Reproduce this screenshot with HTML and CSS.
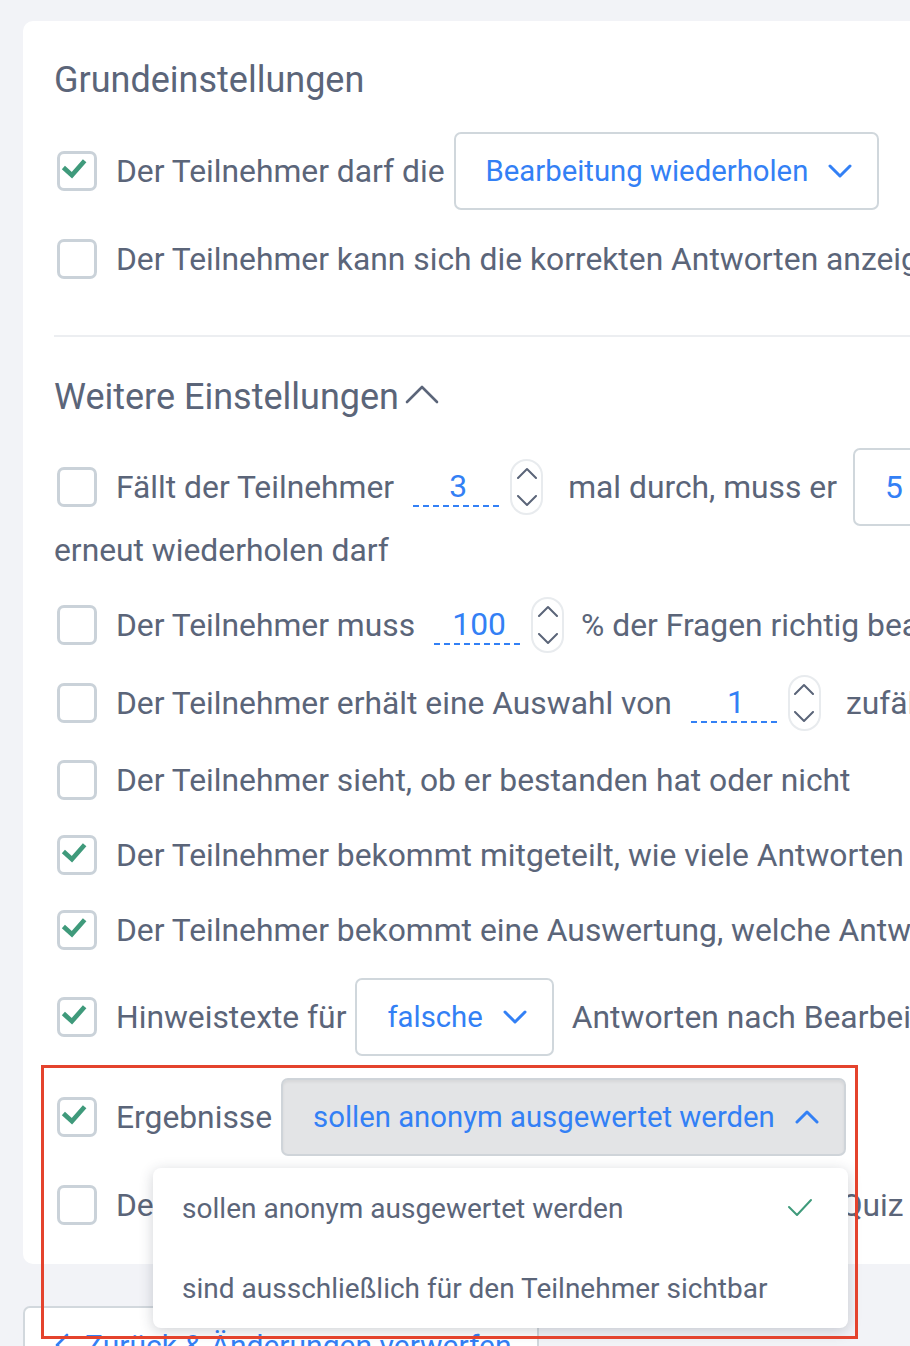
FILE: index.html
```html
<!DOCTYPE html>
<html lang="de">
<head>
<meta charset="utf-8">
<title>Einstellungen</title>
<link rel="stylesheet" href="styles.css">
</head>
<body>
<div class="page">
  <section class="card">
    <h2 class="heading heading-first">Grundeinstellungen</h2>
    <div class="rows">
      <div class="row">
        <span class="cb checked"><svg viewBox="0 0 40 40" width="34" height="34"><path d="M4 16 L14 25 L29 8" /></svg></span>
        <span class="label">Der Teilnehmer darf die</span>
        <span class="select sel-first"><span>Bearbeitung wiederholen</span><svg class="chev" viewBox="0 0 24 14" width="24" height="14"><path d="M2 2 L12 12 L22 2"/></svg></span>
      </div>
      <div class="row">
        <span class="cb"></span>
        <span class="label">Der Teilnehmer kann sich die korrekten Antworten anzeigen lassen</span>
      </div>
    </div>

    <hr class="divider">

    <h2 class="heading heading-second">Weitere Einstellungen<svg class="heading-chev" viewBox="0 0 34 22" width="34" height="22"><path d="M2 19 L17 4 L32 19"/></svg></h2>

    <div class="rows">
      <div class="wrap-row">
        <div class="row row-tall">
          <span class="cb"></span>
          <span class="label">Fällt der Teilnehmer</span>
          <span class="num">3</span>
          <span class="spin"><svg viewBox="0 0 22 12" width="22" height="12"><path d="M2 11 L11 2 L20 11"/></svg><svg viewBox="0 0 22 12" width="22" height="12"><path d="M2 1 L11 10 L20 1"/></svg></span>
          <span class="label after-spin">mal durch, muss er</span>
          <span class="select sel-five"><span>5</span><svg class="chev" viewBox="0 0 24 14" width="24" height="14"><path d="M2 2 L12 12 L22 2"/></svg></span>
        </div>
        <div class="row-cont">erneut wiederholen darf</div>
      </div>
      <div class="row row-spin">
        <span class="cb"></span>
        <span class="label">Der Teilnehmer muss</span>
        <span class="num">100</span>
        <span class="spin"><svg viewBox="0 0 22 12" width="22" height="12"><path d="M2 11 L11 2 L20 11"/></svg><svg viewBox="0 0 22 12" width="22" height="12"><path d="M2 1 L11 10 L20 1"/></svg></span>
        <span class="label after-spin-s">% der Fragen richtig beantworten</span>
      </div>
      <div class="row row-spin">
        <span class="cb"></span>
        <span class="label">Der Teilnehmer erhält eine Auswahl von</span>
        <span class="num">1</span>
        <span class="spin"><svg viewBox="0 0 22 12" width="22" height="12"><path d="M2 11 L11 2 L20 11"/></svg><svg viewBox="0 0 22 12" width="22" height="12"><path d="M2 1 L11 10 L20 1"/></svg></span>
        <span class="label after-spin">zufälligen Fragen</span>
      </div>
      <div class="row">
        <span class="cb"></span>
        <span class="label">Der Teilnehmer sieht, ob er bestanden hat oder nicht</span>
      </div>
      <div class="row">
        <span class="cb checked"><svg viewBox="0 0 40 40" width="34" height="34"><path d="M4 16 L14 25 L29 8" /></svg></span>
        <span class="label">Der Teilnehmer bekommt mitgeteilt, wie viele Antworten richtig waren</span>
      </div>
      <div class="row">
        <span class="cb checked"><svg viewBox="0 0 40 40" width="34" height="34"><path d="M4 16 L14 25 L29 8" /></svg></span>
        <span class="label">Der Teilnehmer bekommt eine Auswertung, welche Antworten richtig waren</span>
      </div>
      <div class="row">
        <span class="cb checked"><svg viewBox="0 0 40 40" width="34" height="34"><path d="M4 16 L14 25 L29 8" /></svg></span>
        <span class="label">Hinweistexte für</span>
        <span class="select"><span>falsche</span><svg class="chev" viewBox="0 0 24 14" width="24" height="14"><path d="M2 2 L12 12 L22 2"/></svg></span>
        <span class="label after-select">Antworten nach Bearbeitung anzeigen</span>
      </div>
      <div class="row">
        <span class="cb checked"><svg viewBox="0 0 40 40" width="34" height="34"><path d="M4 16 L14 25 L29 8" /></svg></span>
        <span class="label">Ergebnisse</span>
        <span class="select select-open"><span>sollen anonym ausgewertet werden</span><svg class="chev" viewBox="0 0 24 14" width="24" height="14"><path d="M2 12 L12 2 L22 12"/></svg>
          <span class="menu">
            <span class="menu-item">sollen anonym ausgewertet werden<svg class="menu-check" viewBox="0 0 26 20" width="26" height="20"><path d="M2 9 L10 17 L24 2"/></svg></span>
            <span class="menu-item">sind ausschließlich für den Teilnehmer sichtbar</span>
          </span>
        </span>
      </div>
      <div class="row">
        <span class="cb"></span>
        <span class="label">Der Teilnehmer erhält seine Bestätigung über jedes Quiz</span>
      </div>
    </div>
  </section>

  <button class="back" type="button"><svg viewBox="0 0 14 24" width="14" height="24"><path d="M12 2 L2 12 L12 22"/></svg><span>Zurück &amp; Änderungen verwerfen</span></button>

  <div class="annot"></div>
</div>
</body>
</html>
```

FILE: styles.css
```css
html, body {
  margin: 0;
  padding: 0;
}
body {
  background: #f2f3f7;
  font-family: Roboto, "Noto Sans", sans-serif;
  color: #5b6579;
  overflow: hidden;
  height: 1346px;
}
.page {
  position: relative;
  padding: 21px 0 0 23px;
  width: 1400px;
}
.card {
  background: #fff;
  border-radius: 10px;
  padding: 39px 0 33px 31px;
  width: 1340px;
}
.heading {
  margin: 0;
  font-size: 36px;
  font-weight: 400;
  line-height: 40px;
  display: flex;
  align-items: center;
  color: #5b6579;
}
.heading-first { margin-bottom: 32px; }
.heading-second { margin-bottom: 31px; }
.heading-chev {
  margin-left: 6px;
  margin-top: -6px;
  fill: none;
  stroke: #5b6579;
  stroke-width: 2.6;
  stroke-linecap: round;
  stroke-linejoin: round;
}
.divider {
  border: 0;
  height: 2px;
  background: #eceef1;
  margin: 50px 0 40px;
}
.rows {
  display: flex;
  flex-direction: column;
  gap: 22px;
}
.row {
  display: flex;
  align-items: center;
  white-space: nowrap;
  font-size: 31.8px;
  min-height: 53px;
}
.row-tall { min-height: 78px; }
.row-spin { min-height: 56px; }
.row-cont {
  font-size: 31.8px;
  line-height: 49px;
  white-space: nowrap;
}
.label { line-height: 40px; }
.cb {
  width: 40px;
  height: 40px;
  box-sizing: border-box;
  border: 3px solid #cad2d9;
  border-radius: 7px;
  margin-left: 3px;
  margin-right: 19px;
  flex: none;
  background: #fff;
  display: flex;
  align-items: center;
  justify-content: center;
}
.cb svg {
  fill: none;
  stroke: #3f9a7b;
  stroke-width: 5.5;
  stroke-linejoin: miter;
}
.select {
  height: 78px;
  box-sizing: border-box;
  border: 2px solid #d0d7dc;
  border-radius: 7px;
  display: flex;
  align-items: center;
  padding: 0 25px 0 30px;
  color: #3380f5;
  font-size: 29.3px;
  margin-left: 9px;
  flex: none;
  position: relative;
  background: #fff;
}
.chev {
  margin-left: 20px;
  fill: none;
  stroke: #3380f5;
  stroke-width: 3;
  stroke-linecap: round;
  stroke-linejoin: round;
}
.sel-five {
  margin-left: 16px;
  width: 200px;
  font-size: 31.8px;
}
.sel-five .chev { margin-left: auto; }
.after-select { margin-left: 18px; }
.after-spin { margin-left: 25px; }
.after-spin-s { margin-left: 17px; }
.num {
  width: 90px;
  height: 40px;
  box-sizing: border-box;
  margin-left: 19px;
  text-align: center;
  line-height: 38px;
  color: #3380f5;
  background-image: linear-gradient(to right, #3380f5 60%, transparent 60%);
  background-size: 10px 2px;
  background-repeat: repeat-x;
  background-position: left bottom;
  flex: none;
}
.spin {
  width: 33px;
  height: 56px;
  box-sizing: border-box;
  border: 2px solid #e8ebee;
  border-radius: 17px;
  margin-left: 7px;
  display: flex;
  flex-direction: column;
  align-items: center;
  justify-content: space-between;
  padding: 6px 0 6px;
  flex: none;
}
.spin svg {
  fill: none;
  stroke: #5b6579;
  stroke-width: 2;
  stroke-linecap: round;
  stroke-linejoin: round;
}
.select-open {
  background: #e3e4e6;
  border-color: #cfd4d9;
  box-shadow: inset 0 2px 3px rgba(0, 0, 0, 0.06);
}
.menu {
  position: absolute;
  left: -130px;
  top: 88px;
  width: 695px;
  background: #fff;
  border-radius: 8px;
  box-shadow: 0 3px 14px rgba(40, 50, 70, 0.22);
  display: flex;
  flex-direction: column;
  z-index: 5;
}
.menu-item {
  height: 80px;
  display: flex;
  align-items: center;
  padding: 0 35px 0 29px;
  font-size: 28px;
  color: #5b6579;
}
.menu-check {
  margin-left: auto;
  fill: none;
  stroke: #3f9a7b;
  stroke-width: 2;
  stroke-linecap: round;
  stroke-linejoin: round;
}
.back {
  margin-top: 42px;
  width: 516px;
  height: 78px;
  box-sizing: border-box;
  border: 2px solid #d2d8dd;
  border-radius: 7px;
  background: #fff;
  color: #3380f5;
  font-family: Roboto, "Noto Sans", sans-serif;
  font-size: 30px;
  display: flex;
  align-items: center;
  padding: 0 0 0 30px;
  gap: 16px;
}
.back svg {
  fill: none;
  stroke: #3380f5;
  stroke-width: 2.6;
  stroke-linecap: round;
  stroke-linejoin: round;
}
.annot {
  position: absolute;
  left: 41px;
  top: 1065px;
  width: 817px;
  height: 274px;
  box-sizing: border-box;
  border: 3px solid #e4432d;
  pointer-events: none;
  z-index: 10;
}
```
